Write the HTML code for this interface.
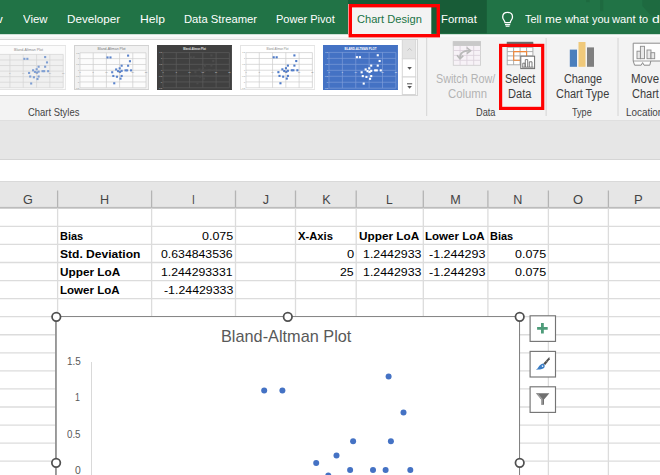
<!DOCTYPE html>
<html><head><meta charset="utf-8"><title>Bland-Altman Plot - Excel</title>
<style>
html,body{margin:0;padding:0;}
body{width:660px;height:475px;overflow:hidden;position:relative;background:#fff;font-family:"Liberation Sans",sans-serif;}
.abs{position:absolute;}
.t{position:absolute;white-space:pre;transform-origin:0 0;line-height:normal;display:block;}
#app{position:absolute;left:0;top:0;width:660px;height:475px;overflow:hidden;}
</style></head><body><div id="app">
<!-- tab bar + ribbon backgrounds -->
<svg class="abs" style="left:0;top:0" width="660" height="210" viewBox="0 0 660 210">
<rect x="0" y="0" width="660" height="210" fill="#f3f3f3"/>
<rect x="0" y="34" width="660" height="2.8" fill="#fafafa"/>
<rect x="0" y="0" width="660" height="34.2" fill="#217346"/>
<rect x="348" y="0" width="138.8" height="33.3" fill="#185c37"/>
<rect x="586.2" y="0" width="3.4" height="2.2" fill="#1e6a40"/>
<rect x="600" y="0" width="3.3" height="11.2" fill="#1e6a40"/>
<polygon points="642.3,0 660,0 660,16 651,15.5 642.3,6" fill="#1e6a40"/>
<rect x="348" y="4" width="83.3" height="30" fill="#f3f3f3"/>
<rect x="0" y="120.2" width="660" height="1" fill="#dadada"/>
<rect x="0" y="121.0" width="660" height="39" fill="#e6e6e6"/>
<rect x="0" y="159.2" width="660" height="1" fill="#d2d2d2"/>
<rect x="0" y="160.0" width="660" height="21.6" fill="#fff"/>
<rect x="0" y="181.2" width="660" height="1" fill="#d2d2d2"/>
<rect x="0" y="182.0" width="660" height="26.2" fill="#e6e6e6"/>
<rect x="0" y="206.9" width="660" height="1.9" fill="#bcbcbc"/>
<rect x="0" y="208.8" width="660" height="2" fill="#fff"/>
</svg>
<!-- gallery -->
<div class="abs" style="left:-2px;top:39px;width:418px;height:55px;background:#fff;border:1px solid #d6d6d6"></div>
<svg class="abs" style="left:-9.2px;top:44.6px" width="75.2" height="45" viewBox="0 0 75.2 45"><rect x="0.5" y="0.5" width="74.2" height="44" fill="#fbfbfb" stroke="#e4e4e4" stroke-width="1"/><rect x="5.6" y="9.4" width="66.6" height="33.4" fill="#f0f0f0"/><line x1="5.60" y1="9.4" x2="5.60" y2="42.8" stroke="#d4d4d4" stroke-width="0.7"/><line x1="18.92" y1="9.4" x2="18.92" y2="42.8" stroke="#d4d4d4" stroke-width="0.7"/><line x1="32.24" y1="9.4" x2="32.24" y2="42.8" stroke="#d4d4d4" stroke-width="0.7"/><line x1="45.56" y1="9.4" x2="45.56" y2="42.8" stroke="#d4d4d4" stroke-width="0.7"/><line x1="58.88" y1="9.4" x2="58.88" y2="42.8" stroke="#d4d4d4" stroke-width="0.7"/><line x1="72.20" y1="9.4" x2="72.20" y2="42.8" stroke="#d4d4d4" stroke-width="0.7"/><line x1="5.6" y1="9.40" x2="72.19999999999999" y2="9.40" stroke="#d4d4d4" stroke-width="0.7"/><line x1="5.6" y1="14.97" x2="72.19999999999999" y2="14.97" stroke="#d4d4d4" stroke-width="0.7"/><line x1="5.6" y1="20.53" x2="72.19999999999999" y2="20.53" stroke="#d4d4d4" stroke-width="0.7"/><line x1="5.6" y1="26.10" x2="72.19999999999999" y2="26.10" stroke="#d4d4d4" stroke-width="0.7"/><line x1="5.6" y1="31.67" x2="72.19999999999999" y2="31.67" stroke="#d4d4d4" stroke-width="0.7"/><line x1="5.6" y1="37.23" x2="72.19999999999999" y2="37.23" stroke="#d4d4d4" stroke-width="0.7"/><line x1="5.6" y1="42.80" x2="72.19999999999999" y2="42.80" stroke="#d4d4d4" stroke-width="0.7"/><rect x="32.32" y="12.79" width="2.1" height="2.1" fill="#7f9fd3"/><rect x="35.32" y="12.79" width="2.1" height="2.1" fill="#7f9fd3"/><rect x="53.10" y="11.02" width="2.1" height="2.1" fill="#7f9fd3"/><rect x="54.97" y="16.37" width="2.1" height="2.1" fill="#7f9fd3"/><rect x="53.10" y="20.67" width="2.1" height="2.1" fill="#7f9fd3"/><rect x="46.57" y="20.67" width="2.1" height="2.1" fill="#7f9fd3"/><rect x="44.64" y="23.18" width="2.1" height="2.1" fill="#7f9fd3"/><rect x="41.05" y="24.25" width="2.1" height="2.1" fill="#7f9fd3"/><rect x="42.91" y="25.85" width="2.1" height="2.1" fill="#7f9fd3"/><rect x="44.98" y="26.62" width="2.1" height="2.1" fill="#7f9fd3"/><rect x="46.57" y="25.58" width="2.1" height="2.1" fill="#7f9fd3"/><rect x="50.50" y="25.12" width="2.1" height="2.1" fill="#7f9fd3"/><rect x="52.10" y="25.12" width="2.1" height="2.1" fill="#7f9fd3"/><rect x="56.10" y="25.12" width="2.1" height="2.1" fill="#7f9fd3"/><rect x="37.05" y="26.92" width="2.1" height="2.1" fill="#7f9fd3"/><rect x="38.18" y="30.46" width="2.1" height="2.1" fill="#7f9fd3"/><rect x="41.85" y="31.20" width="2.1" height="2.1" fill="#7f9fd3"/><rect x="46.57" y="30.46" width="2.1" height="2.1" fill="#7f9fd3"/><rect x="45.44" y="33.00" width="2.1" height="2.1" fill="#7f9fd3"/><rect x="39.12" y="37.44" width="2.1" height="2.1" fill="#7f9fd3"/><text x="37.6" y="6.3" font-family="Liberation Sans, sans-serif" font-size="3.6" text-anchor="middle" textLength="29" lengthAdjust="spacingAndGlyphs" fill="#8a8a8a" font-weight="400">Bland-Altman Plot</text><text x="5.60" y="28.70" font-family="Liberation Sans, sans-serif" font-size="2.2" text-anchor="middle" fill="#a8a8a8">0</text><text x="18.92" y="28.70" font-family="Liberation Sans, sans-serif" font-size="2.2" text-anchor="middle" fill="#a8a8a8">5</text><text x="32.24" y="28.70" font-family="Liberation Sans, sans-serif" font-size="2.2" text-anchor="middle" fill="#a8a8a8">10</text><text x="45.56" y="28.70" font-family="Liberation Sans, sans-serif" font-size="2.2" text-anchor="middle" fill="#a8a8a8">15</text><text x="58.88" y="28.70" font-family="Liberation Sans, sans-serif" font-size="2.2" text-anchor="middle" fill="#a8a8a8">20</text><text x="72.20" y="28.70" font-family="Liberation Sans, sans-serif" font-size="2.2" text-anchor="middle" fill="#a8a8a8">25</text></svg><svg class="abs" style="left:73.8px;top:44.6px" width="75.2" height="45" viewBox="0 0 75.2 45"><rect x="0.5" y="0.5" width="74.2" height="44" fill="#f1f1f1" stroke="#d2d2d2" stroke-width="1"/><rect x="6.0" y="7.8" width="66.0" height="35.0" fill="#fcfcfc"/><line x1="6.00" y1="7.8" x2="6.00" y2="42.8" stroke="#cdcdcd" stroke-width="0.7"/><line x1="19.20" y1="7.8" x2="19.20" y2="42.8" stroke="#cdcdcd" stroke-width="0.7"/><line x1="32.40" y1="7.8" x2="32.40" y2="42.8" stroke="#cdcdcd" stroke-width="0.7"/><line x1="45.60" y1="7.8" x2="45.60" y2="42.8" stroke="#cdcdcd" stroke-width="0.7"/><line x1="58.80" y1="7.8" x2="58.80" y2="42.8" stroke="#cdcdcd" stroke-width="0.7"/><line x1="72.00" y1="7.8" x2="72.00" y2="42.8" stroke="#cdcdcd" stroke-width="0.7"/><line x1="6.0" y1="7.80" x2="72.0" y2="7.80" stroke="#cdcdcd" stroke-width="0.7"/><line x1="6.0" y1="13.63" x2="72.0" y2="13.63" stroke="#cdcdcd" stroke-width="0.7"/><line x1="6.0" y1="19.47" x2="72.0" y2="19.47" stroke="#cdcdcd" stroke-width="0.7"/><line x1="6.0" y1="25.30" x2="72.0" y2="25.30" stroke="#cdcdcd" stroke-width="0.7"/><line x1="6.0" y1="31.13" x2="72.0" y2="31.13" stroke="#cdcdcd" stroke-width="0.7"/><line x1="6.0" y1="36.97" x2="72.0" y2="36.97" stroke="#cdcdcd" stroke-width="0.7"/><line x1="6.0" y1="42.80" x2="72.0" y2="42.80" stroke="#cdcdcd" stroke-width="0.7"/><rect x="32.47" y="11.40" width="2.1" height="2.1" fill="#5b84cc"/><rect x="35.44" y="11.40" width="2.1" height="2.1" fill="#5b84cc"/><rect x="53.06" y="9.55" width="2.1" height="2.1" fill="#5b84cc"/><rect x="54.91" y="15.15" width="2.1" height="2.1" fill="#5b84cc"/><rect x="53.06" y="19.66" width="2.1" height="2.1" fill="#5b84cc"/><rect x="46.60" y="19.66" width="2.1" height="2.1" fill="#5b84cc"/><rect x="44.68" y="22.29" width="2.1" height="2.1" fill="#5b84cc"/><rect x="41.12" y="23.41" width="2.1" height="2.1" fill="#5b84cc"/><rect x="42.97" y="25.09" width="2.1" height="2.1" fill="#5b84cc"/><rect x="45.01" y="25.90" width="2.1" height="2.1" fill="#5b84cc"/><rect x="46.60" y="24.81" width="2.1" height="2.1" fill="#5b84cc"/><rect x="50.49" y="24.32" width="2.1" height="2.1" fill="#5b84cc"/><rect x="52.07" y="24.32" width="2.1" height="2.1" fill="#5b84cc"/><rect x="56.03" y="24.32" width="2.1" height="2.1" fill="#5b84cc"/><rect x="37.16" y="26.21" width="2.1" height="2.1" fill="#5b84cc"/><rect x="38.28" y="29.92" width="2.1" height="2.1" fill="#5b84cc"/><rect x="41.91" y="30.69" width="2.1" height="2.1" fill="#5b84cc"/><rect x="46.60" y="29.92" width="2.1" height="2.1" fill="#5b84cc"/><rect x="45.47" y="32.58" width="2.1" height="2.1" fill="#5b84cc"/><rect x="39.20" y="37.23" width="2.1" height="2.1" fill="#5b84cc"/><text x="37.6" y="5.0" font-family="Liberation Sans, sans-serif" font-size="3.6" text-anchor="middle" textLength="28" lengthAdjust="spacingAndGlyphs" fill="#777" font-weight="400">Bland-Altman Plot</text><text x="6.00" y="27.90" font-family="Liberation Sans, sans-serif" font-size="2.2" text-anchor="middle" fill="#8e8e8e">0</text><text x="19.20" y="27.90" font-family="Liberation Sans, sans-serif" font-size="2.2" text-anchor="middle" fill="#8e8e8e">5</text><text x="32.40" y="27.90" font-family="Liberation Sans, sans-serif" font-size="2.2" text-anchor="middle" fill="#8e8e8e">10</text><text x="45.60" y="27.90" font-family="Liberation Sans, sans-serif" font-size="2.2" text-anchor="middle" fill="#8e8e8e">15</text><text x="58.80" y="27.90" font-family="Liberation Sans, sans-serif" font-size="2.2" text-anchor="middle" fill="#8e8e8e">20</text><text x="72.00" y="27.90" font-family="Liberation Sans, sans-serif" font-size="2.2" text-anchor="middle" fill="#8e8e8e">25</text><text x="5.20" y="8.60" font-family="Liberation Sans, sans-serif" font-size="2.2" text-anchor="end" fill="#8e8e8e">1.5</text><text x="5.20" y="14.43" font-family="Liberation Sans, sans-serif" font-size="2.2" text-anchor="end" fill="#8e8e8e">1</text><text x="5.20" y="20.27" font-family="Liberation Sans, sans-serif" font-size="2.2" text-anchor="end" fill="#8e8e8e">0.5</text><text x="5.20" y="26.10" font-family="Liberation Sans, sans-serif" font-size="2.2" text-anchor="end" fill="#8e8e8e">0</text><text x="5.20" y="31.93" font-family="Liberation Sans, sans-serif" font-size="2.2" text-anchor="end" fill="#8e8e8e">-0.5</text><text x="5.20" y="37.77" font-family="Liberation Sans, sans-serif" font-size="2.2" text-anchor="end" fill="#8e8e8e">-1</text><text x="5.20" y="43.60" font-family="Liberation Sans, sans-serif" font-size="2.2" text-anchor="end" fill="#8e8e8e">-1.5</text></svg><svg class="abs" style="left:156.8px;top:44.6px" width="75.2" height="45" viewBox="0 0 75.2 45"><rect x="0.5" y="0.5" width="74.2" height="44" fill="#404040" stroke="#404040" stroke-width="1"/><line x1="6.00" y1="7.6" x2="6.00" y2="42.800000000000004" stroke="#5c5c5c" stroke-width="0.7"/><line x1="19.28" y1="7.6" x2="19.28" y2="42.800000000000004" stroke="#5c5c5c" stroke-width="0.7"/><line x1="32.56" y1="7.6" x2="32.56" y2="42.800000000000004" stroke="#5c5c5c" stroke-width="0.7"/><line x1="45.84" y1="7.6" x2="45.84" y2="42.800000000000004" stroke="#5c5c5c" stroke-width="0.7"/><line x1="59.12" y1="7.6" x2="59.12" y2="42.800000000000004" stroke="#5c5c5c" stroke-width="0.7"/><line x1="72.40" y1="7.6" x2="72.40" y2="42.800000000000004" stroke="#5c5c5c" stroke-width="0.7"/><line x1="6.0" y1="7.60" x2="72.4" y2="7.60" stroke="#5c5c5c" stroke-width="0.7"/><line x1="6.0" y1="13.47" x2="72.4" y2="13.47" stroke="#5c5c5c" stroke-width="0.7"/><line x1="6.0" y1="19.33" x2="72.4" y2="19.33" stroke="#5c5c5c" stroke-width="0.7"/><line x1="6.0" y1="25.20" x2="72.4" y2="25.20" stroke="#5c5c5c" stroke-width="0.7"/><line x1="6.0" y1="31.07" x2="72.4" y2="31.07" stroke="#5c5c5c" stroke-width="0.7"/><line x1="6.0" y1="36.93" x2="72.4" y2="36.93" stroke="#5c5c5c" stroke-width="0.7"/><line x1="6.0" y1="42.80" x2="72.4" y2="42.80" stroke="#5c5c5c" stroke-width="0.7"/><rect x="32.64" y="11.23" width="2.1" height="2.1" fill="#4c4c4c"/><rect x="35.63" y="11.23" width="2.1" height="2.1" fill="#4c4c4c"/><rect x="53.36" y="9.37" width="2.1" height="2.1" fill="#4c4c4c"/><rect x="55.21" y="15.00" width="2.1" height="2.1" fill="#4c4c4c"/><rect x="53.36" y="19.54" width="2.1" height="2.1" fill="#4c4c4c"/><rect x="46.85" y="19.54" width="2.1" height="2.1" fill="#4c4c4c"/><rect x="44.92" y="22.18" width="2.1" height="2.1" fill="#4c4c4c"/><rect x="41.34" y="23.31" width="2.1" height="2.1" fill="#4c4c4c"/><rect x="43.20" y="24.99" width="2.1" height="2.1" fill="#4c4c4c"/><rect x="45.25" y="25.80" width="2.1" height="2.1" fill="#4c4c4c"/><rect x="46.85" y="24.71" width="2.1" height="2.1" fill="#4c4c4c"/><rect x="50.77" y="24.22" width="2.1" height="2.1" fill="#4c4c4c"/><rect x="52.36" y="24.22" width="2.1" height="2.1" fill="#4c4c4c"/><rect x="56.34" y="24.22" width="2.1" height="2.1" fill="#4c4c4c"/><rect x="37.35" y="26.12" width="2.1" height="2.1" fill="#4c4c4c"/><rect x="38.48" y="29.85" width="2.1" height="2.1" fill="#4c4c4c"/><rect x="42.13" y="30.63" width="2.1" height="2.1" fill="#4c4c4c"/><rect x="46.85" y="29.85" width="2.1" height="2.1" fill="#4c4c4c"/><rect x="45.72" y="32.53" width="2.1" height="2.1" fill="#4c4c4c"/><rect x="39.41" y="37.21" width="2.1" height="2.1" fill="#4c4c4c"/><text x="37.6" y="5.0" font-family="Liberation Sans, sans-serif" font-size="3.0" text-anchor="middle" textLength="22.7" lengthAdjust="spacingAndGlyphs" fill="#e0e0e0" font-weight="700">Bland-Altman Plot</text><text x="6.00" y="27.80" font-family="Liberation Sans, sans-serif" font-size="2.2" text-anchor="middle" fill="#c8c8c8">0</text><text x="19.28" y="27.80" font-family="Liberation Sans, sans-serif" font-size="2.2" text-anchor="middle" fill="#c8c8c8">5</text><text x="32.56" y="27.80" font-family="Liberation Sans, sans-serif" font-size="2.2" text-anchor="middle" fill="#c8c8c8">10</text><text x="45.84" y="27.80" font-family="Liberation Sans, sans-serif" font-size="2.2" text-anchor="middle" fill="#c8c8c8">15</text><text x="59.12" y="27.80" font-family="Liberation Sans, sans-serif" font-size="2.2" text-anchor="middle" fill="#c8c8c8">20</text><text x="72.40" y="27.80" font-family="Liberation Sans, sans-serif" font-size="2.2" text-anchor="middle" fill="#c8c8c8">25</text><text x="5.20" y="8.40" font-family="Liberation Sans, sans-serif" font-size="2.2" text-anchor="end" fill="#c8c8c8">1.5</text><text x="5.20" y="14.27" font-family="Liberation Sans, sans-serif" font-size="2.2" text-anchor="end" fill="#c8c8c8">1</text><text x="5.20" y="20.13" font-family="Liberation Sans, sans-serif" font-size="2.2" text-anchor="end" fill="#c8c8c8">0.5</text><text x="5.20" y="26.00" font-family="Liberation Sans, sans-serif" font-size="2.2" text-anchor="end" fill="#c8c8c8">0</text><text x="5.20" y="31.87" font-family="Liberation Sans, sans-serif" font-size="2.2" text-anchor="end" fill="#c8c8c8">-0.5</text><text x="5.20" y="37.73" font-family="Liberation Sans, sans-serif" font-size="2.2" text-anchor="end" fill="#c8c8c8">-1</text><text x="5.20" y="43.60" font-family="Liberation Sans, sans-serif" font-size="2.2" text-anchor="end" fill="#c8c8c8">-1.5</text></svg><svg class="abs" style="left:239.8px;top:44.6px" width="75.2" height="45" viewBox="0 0 75.2 45"><rect x="0.5" y="0.5" width="74.2" height="44" fill="#ffffff" stroke="#e4e4e4" stroke-width="1"/><line x1="6.00" y1="7.6" x2="6.00" y2="42.800000000000004" stroke="#cccccc" stroke-width="0.7"/><line x1="19.28" y1="7.6" x2="19.28" y2="42.800000000000004" stroke="#cccccc" stroke-width="0.7"/><line x1="32.56" y1="7.6" x2="32.56" y2="42.800000000000004" stroke="#cccccc" stroke-width="0.7"/><line x1="45.84" y1="7.6" x2="45.84" y2="42.800000000000004" stroke="#cccccc" stroke-width="0.7"/><line x1="59.12" y1="7.6" x2="59.12" y2="42.800000000000004" stroke="#cccccc" stroke-width="0.7"/><line x1="72.40" y1="7.6" x2="72.40" y2="42.800000000000004" stroke="#cccccc" stroke-width="0.7"/><line x1="6.0" y1="7.60" x2="72.4" y2="7.60" stroke="#cccccc" stroke-width="0.7"/><line x1="6.0" y1="13.47" x2="72.4" y2="13.47" stroke="#cccccc" stroke-width="0.7"/><line x1="6.0" y1="19.33" x2="72.4" y2="19.33" stroke="#cccccc" stroke-width="0.7"/><line x1="6.0" y1="25.20" x2="72.4" y2="25.20" stroke="#cccccc" stroke-width="0.7"/><line x1="6.0" y1="31.07" x2="72.4" y2="31.07" stroke="#cccccc" stroke-width="0.7"/><line x1="6.0" y1="36.93" x2="72.4" y2="36.93" stroke="#cccccc" stroke-width="0.7"/><line x1="6.0" y1="42.80" x2="72.4" y2="42.80" stroke="#cccccc" stroke-width="0.7"/><rect x="32.64" y="11.23" width="2.1" height="2.1" fill="#4f7bc8"/><rect x="35.63" y="11.23" width="2.1" height="2.1" fill="#4f7bc8"/><rect x="53.36" y="9.37" width="2.1" height="2.1" fill="#4f7bc8"/><rect x="55.21" y="15.00" width="2.1" height="2.1" fill="#4f7bc8"/><rect x="53.36" y="19.54" width="2.1" height="2.1" fill="#4f7bc8"/><rect x="46.85" y="19.54" width="2.1" height="2.1" fill="#4f7bc8"/><rect x="44.92" y="22.18" width="2.1" height="2.1" fill="#4f7bc8"/><rect x="41.34" y="23.31" width="2.1" height="2.1" fill="#4f7bc8"/><rect x="43.20" y="24.99" width="2.1" height="2.1" fill="#4f7bc8"/><rect x="45.25" y="25.80" width="2.1" height="2.1" fill="#4f7bc8"/><rect x="46.85" y="24.71" width="2.1" height="2.1" fill="#4f7bc8"/><rect x="50.77" y="24.22" width="2.1" height="2.1" fill="#4f7bc8"/><rect x="52.36" y="24.22" width="2.1" height="2.1" fill="#4f7bc8"/><rect x="56.34" y="24.22" width="2.1" height="2.1" fill="#4f7bc8"/><rect x="37.35" y="26.12" width="2.1" height="2.1" fill="#4f7bc8"/><rect x="38.48" y="29.85" width="2.1" height="2.1" fill="#4f7bc8"/><rect x="42.13" y="30.63" width="2.1" height="2.1" fill="#4f7bc8"/><rect x="46.85" y="29.85" width="2.1" height="2.1" fill="#4f7bc8"/><rect x="45.72" y="32.53" width="2.1" height="2.1" fill="#4f7bc8"/><rect x="39.41" y="37.21" width="2.1" height="2.1" fill="#4f7bc8"/><text x="37.6" y="5.0" font-family="Liberation Sans, sans-serif" font-size="3.0" text-anchor="middle" textLength="22" lengthAdjust="spacingAndGlyphs" fill="#8a8a8a" font-weight="400">Bland-Altman Plot</text><text x="6.00" y="27.80" font-family="Liberation Sans, sans-serif" font-size="2.2" text-anchor="middle" fill="#8e8e8e">0</text><text x="19.28" y="27.80" font-family="Liberation Sans, sans-serif" font-size="2.2" text-anchor="middle" fill="#8e8e8e">5</text><text x="32.56" y="27.80" font-family="Liberation Sans, sans-serif" font-size="2.2" text-anchor="middle" fill="#8e8e8e">10</text><text x="45.84" y="27.80" font-family="Liberation Sans, sans-serif" font-size="2.2" text-anchor="middle" fill="#8e8e8e">15</text><text x="59.12" y="27.80" font-family="Liberation Sans, sans-serif" font-size="2.2" text-anchor="middle" fill="#8e8e8e">20</text><text x="72.40" y="27.80" font-family="Liberation Sans, sans-serif" font-size="2.2" text-anchor="middle" fill="#8e8e8e">25</text><text x="5.20" y="8.40" font-family="Liberation Sans, sans-serif" font-size="2.2" text-anchor="end" fill="#8e8e8e">1.5</text><text x="5.20" y="14.27" font-family="Liberation Sans, sans-serif" font-size="2.2" text-anchor="end" fill="#8e8e8e">1</text><text x="5.20" y="20.13" font-family="Liberation Sans, sans-serif" font-size="2.2" text-anchor="end" fill="#8e8e8e">0.5</text><text x="5.20" y="26.00" font-family="Liberation Sans, sans-serif" font-size="2.2" text-anchor="end" fill="#8e8e8e">0</text><text x="5.20" y="31.87" font-family="Liberation Sans, sans-serif" font-size="2.2" text-anchor="end" fill="#8e8e8e">-0.5</text><text x="5.20" y="37.73" font-family="Liberation Sans, sans-serif" font-size="2.2" text-anchor="end" fill="#8e8e8e">-1</text><text x="5.20" y="43.60" font-family="Liberation Sans, sans-serif" font-size="2.2" text-anchor="end" fill="#8e8e8e">-1.5</text></svg><svg class="abs" style="left:322.6px;top:44.6px" width="75.2" height="45" viewBox="0 0 75.2 45"><rect x="0.5" y="0.5" width="74.2" height="44" fill="#4472c4" stroke="#4472c4" stroke-width="1"/><line x1="6.00" y1="7.4" x2="6.00" y2="43.199999999999996" stroke="#7d9cd8" stroke-width="0.7"/><line x1="19.38" y1="7.4" x2="19.38" y2="43.199999999999996" stroke="#7d9cd8" stroke-width="0.7"/><line x1="32.76" y1="7.4" x2="32.76" y2="43.199999999999996" stroke="#7d9cd8" stroke-width="0.7"/><line x1="46.14" y1="7.4" x2="46.14" y2="43.199999999999996" stroke="#7d9cd8" stroke-width="0.7"/><line x1="59.52" y1="7.4" x2="59.52" y2="43.199999999999996" stroke="#7d9cd8" stroke-width="0.7"/><line x1="72.90" y1="7.4" x2="72.90" y2="43.199999999999996" stroke="#7d9cd8" stroke-width="0.7"/><line x1="6.0" y1="7.40" x2="72.9" y2="7.40" stroke="#7d9cd8" stroke-width="0.7"/><line x1="6.0" y1="13.37" x2="72.9" y2="13.37" stroke="#7d9cd8" stroke-width="0.7"/><line x1="6.0" y1="19.33" x2="72.9" y2="19.33" stroke="#7d9cd8" stroke-width="0.7"/><line x1="6.0" y1="25.30" x2="72.9" y2="25.30" stroke="#7d9cd8" stroke-width="0.7"/><line x1="6.0" y1="31.27" x2="72.9" y2="31.27" stroke="#7d9cd8" stroke-width="0.7"/><line x1="6.0" y1="37.23" x2="72.9" y2="37.23" stroke="#7d9cd8" stroke-width="0.7"/><line x1="6.0" y1="43.20" x2="72.9" y2="43.20" stroke="#7d9cd8" stroke-width="0.7"/><rect x="32.85" y="11.11" width="2.1" height="2.1" fill="#ffffff"/><rect x="35.86" y="11.11" width="2.1" height="2.1" fill="#ffffff"/><rect x="53.72" y="9.21" width="2.1" height="2.1" fill="#ffffff"/><rect x="55.59" y="14.94" width="2.1" height="2.1" fill="#ffffff"/><rect x="53.72" y="19.56" width="2.1" height="2.1" fill="#ffffff"/><rect x="47.16" y="19.56" width="2.1" height="2.1" fill="#ffffff"/><rect x="45.22" y="22.25" width="2.1" height="2.1" fill="#ffffff"/><rect x="41.61" y="23.39" width="2.1" height="2.1" fill="#ffffff"/><rect x="43.48" y="25.11" width="2.1" height="2.1" fill="#ffffff"/><rect x="45.56" y="25.93" width="2.1" height="2.1" fill="#ffffff"/><rect x="47.16" y="24.82" width="2.1" height="2.1" fill="#ffffff"/><rect x="51.11" y="24.32" width="2.1" height="2.1" fill="#ffffff"/><rect x="52.72" y="24.32" width="2.1" height="2.1" fill="#ffffff"/><rect x="56.73" y="24.32" width="2.1" height="2.1" fill="#ffffff"/><rect x="37.60" y="26.25" width="2.1" height="2.1" fill="#ffffff"/><rect x="38.73" y="30.05" width="2.1" height="2.1" fill="#ffffff"/><rect x="42.41" y="30.84" width="2.1" height="2.1" fill="#ffffff"/><rect x="47.16" y="30.05" width="2.1" height="2.1" fill="#ffffff"/><rect x="46.03" y="32.77" width="2.1" height="2.1" fill="#ffffff"/><rect x="39.67" y="37.53" width="2.1" height="2.1" fill="#ffffff"/><text x="37.6" y="5.0" font-family="Liberation Sans, sans-serif" font-size="3.0" text-anchor="middle" textLength="32" lengthAdjust="spacingAndGlyphs" fill="#fff" font-weight="700">BLAND-ALTMAN PLOT</text><text x="6.00" y="27.90" font-family="Liberation Sans, sans-serif" font-size="2.2" text-anchor="middle" fill="#e4ebf8">0</text><text x="19.38" y="27.90" font-family="Liberation Sans, sans-serif" font-size="2.2" text-anchor="middle" fill="#e4ebf8">5</text><text x="32.76" y="27.90" font-family="Liberation Sans, sans-serif" font-size="2.2" text-anchor="middle" fill="#e4ebf8">10</text><text x="46.14" y="27.90" font-family="Liberation Sans, sans-serif" font-size="2.2" text-anchor="middle" fill="#e4ebf8">15</text><text x="59.52" y="27.90" font-family="Liberation Sans, sans-serif" font-size="2.2" text-anchor="middle" fill="#e4ebf8">20</text><text x="72.90" y="27.90" font-family="Liberation Sans, sans-serif" font-size="2.2" text-anchor="middle" fill="#e4ebf8">25</text><text x="5.20" y="8.20" font-family="Liberation Sans, sans-serif" font-size="2.2" text-anchor="end" fill="#e4ebf8">1.5</text><text x="5.20" y="14.17" font-family="Liberation Sans, sans-serif" font-size="2.2" text-anchor="end" fill="#e4ebf8">1</text><text x="5.20" y="20.13" font-family="Liberation Sans, sans-serif" font-size="2.2" text-anchor="end" fill="#e4ebf8">0.5</text><text x="5.20" y="26.10" font-family="Liberation Sans, sans-serif" font-size="2.2" text-anchor="end" fill="#e4ebf8">0</text><text x="5.20" y="32.07" font-family="Liberation Sans, sans-serif" font-size="2.2" text-anchor="end" fill="#e4ebf8">-0.5</text><text x="5.20" y="38.03" font-family="Liberation Sans, sans-serif" font-size="2.2" text-anchor="end" fill="#e4ebf8">-1</text><text x="5.20" y="44.00" font-family="Liberation Sans, sans-serif" font-size="2.2" text-anchor="end" fill="#e4ebf8">-1.5</text></svg>
<svg class="abs" style="left:400px;top:36px" width="20" height="62" viewBox="400 36 20 62">
<rect x="402.3" y="39.5" width="13.4" height="19.3" fill="#e4e4e4" stroke="#d6d6d6"/>
<rect x="402.3" y="58.8" width="13.4" height="18.2" fill="#fff" stroke="#d6d6d6"/>
<rect x="402.3" y="77" width="13.4" height="17.5" fill="#fff" stroke="#d6d6d6"/>
<path d="M407.5 50.6 L409.6 48.4 L411.7 50.6" stroke="#c0c0c0" stroke-width="0.9" fill="none"/>
<polygon points="407.3,67 411.9,67 409.6,69.8" fill="#555"/>
<rect x="407" y="83.3" width="5.2" height="1" fill="#555"/>
<polygon points="407.3,86 411.9,86 409.6,88.8" fill="#555"/>
</svg>
<!-- separators -->
<svg class="abs" style="left:420px;top:36px" width="240" height="84" viewBox="420 36 240 84" fill="none" stroke="#d4d4d4" stroke-width="1">
<path d="M426.7 38V116 M546.1 38V116 M618 38V116"/>
</svg>
<!-- ribbon icons -->
<svg class="abs" style="left:430px;top:36px" width="230" height="40" viewBox="430 36 230 40">
<!-- switch row/col (disabled) -->
<g stroke="#ddd3dd" fill="none" stroke-width="0.9">
<rect x="453.3" y="41.7" width="27.2" height="23.6" fill="#f7f2f7" stroke="#cfcfcf"/>
<path d="M453.3 50.5H480.5 M453.3 55.4H480.5 M453.3 60.3H480.5 M460.1 45.4V65.3 M466.9 45.4V65.3 M473.7 45.4V65.3"/>
<rect x="453.3" y="41.7" width="27.2" height="3.8" fill="#c9c9c9" stroke="#c9c9c9"/>
</g>
<path d="M460 58.6 C459.4 53 463.6 50.2 470.2 50.7" stroke="#b9b9b9" stroke-width="1.8" fill="none"/>
<path d="M466.6 47.5 L470.6 50.700 L466.800 53.700 M457 55.3 L460 58.900 L463.300 55.6" stroke="#b9b9b9" stroke-width="1.6" fill="none"/>
<!-- select data -->
<g stroke="#a6a6a6" fill="none" stroke-width="0.9">
<rect x="507.2" y="43" width="25.7" height="21.8" fill="#fff"/>
<path d="M507.2 47.300H532.9 M507.2 51.6H532.9 M507.2 55.9H532.9 M507.2 60.3H532.9 M513.6 43V64.8 M520.1 43V64.8 M526.600 43V64.8"/>
</g>
<rect x="506.8" y="41.8" width="26.4" height="2.2" fill="#6a6a6a"/>
<path d="M526.6 55.9 V51.6 H513.7 V60.3 H520.1" stroke="#f0883a" stroke-width="1.1" fill="none"/>
<rect x="520.8" y="56.2" width="13.8" height="12.4" fill="#fff" stroke="#6e6e6e" stroke-width="1"/>
<path d="M522.8 67V63.200h2.200V67 M525.3 67V59.6h2.4V67 M529.300 67V61.800h2.700V67 M522 67.2H533.6" stroke="#6e6e6e" stroke-width="0.9" fill="none"/>
<!-- change chart type -->
<rect x="569.8" y="49.6" width="7.2" height="17.2" fill="#4b7fbc"/>
<rect x="578.5" y="42" width="7" height="24.8" fill="#f0c97a"/>
<rect x="587" y="47.4" width="7" height="19.4" fill="#7f7f7f"/>
<!-- move chart -->
<path d="M633.2 43.200 H664 V61 H650.8 L649.8 65.200 H644 L642.6 62.6 L641.2 65.200 H634.6 L633.2 61 Z" fill="#fdfdfd" stroke="#8c8c8c" stroke-width="1"/>
<path d="M633.2 61 H651" stroke="#8c8c8c" stroke-width="0.8" fill="none"/>
<g fill="#e9e9e9" stroke="#8c8c8c" stroke-width="0.9">
<rect x="637" y="51.2" width="3.4" height="7.5"/>
<rect x="640.4" y="46.300" width="4.1" height="12.4"/>
<rect x="647" y="50" width="4" height="8.7"/>
<rect x="651" y="52.7" width="3.700" height="6"/>
</g>
</svg>
<!-- red highlight boxes -->
<svg class="abs" style="left:340px;top:0" width="220" height="120" viewBox="340 0 220 120" fill="none" stroke="#ff0000">
<rect x="350.3" y="5.7" width="88.0" height="30.0" stroke-width="3.4"/>
<rect x="500.6" y="45.4" width="42.100" height="63" stroke-width="3.2"/>
</svg>
<!-- lightbulb -->
<svg class="abs" style="left:500px;top:10px" width="16" height="20" viewBox="500 10 16 20">
<path d="M505 22.700 C505 20.700 502.700 19.600 502.700 16.900 C502.700 14 504.900 12.400 507.600 12.400 C510.300 12.400 512.500 14 512.500 16.900 C512.500 19.600 510.200 20.700 510.200 22.700 Z" fill="none" stroke="#fff" stroke-width="1.3"/>
<path d="M505 24.600H510.200 M505.700 26.300H509.500" stroke="#fff" stroke-width="1.1" fill="none"/>
</svg>
<!-- grid -->
<svg class="abs" style="left:0;top:180px" width="660" height="295" viewBox="0 180 660 295" fill="none" stroke-width="1.3"><path d="M57.60 208.3V476" stroke="#dcdcdc"/><path d="M57.60 190.5V207.3" stroke="#b4b4b4"/><path d="M151.60 208.3V476" stroke="#dcdcdc"/><path d="M151.60 190.5V207.3" stroke="#b4b4b4"/><path d="M235.50 208.3V476" stroke="#dcdcdc"/><path d="M235.50 190.5V207.3" stroke="#b4b4b4"/><path d="M295.50 208.3V476" stroke="#dcdcdc"/><path d="M295.50 190.5V207.3" stroke="#b4b4b4"/><path d="M356.20 208.3V476" stroke="#dcdcdc"/><path d="M356.20 190.5V207.3" stroke="#b4b4b4"/><path d="M423.30 208.3V476" stroke="#dcdcdc"/><path d="M423.30 190.5V207.3" stroke="#b4b4b4"/><path d="M487.90 208.3V476" stroke="#dcdcdc"/><path d="M487.90 190.5V207.3" stroke="#b4b4b4"/><path d="M548.40 208.3V476" stroke="#dcdcdc"/><path d="M548.40 190.5V207.3" stroke="#b4b4b4"/><path d="M608.40 208.3V476" stroke="#dcdcdc"/><path d="M608.40 190.5V207.3" stroke="#b4b4b4"/><path d="M0 226.40H660" stroke="#dcdcdc"/><path d="M0 244.46H660" stroke="#dcdcdc"/><path d="M0 262.52H660" stroke="#dcdcdc"/><path d="M0 280.58H660" stroke="#dcdcdc"/><path d="M0 298.64H660" stroke="#dcdcdc"/><path d="M0 316.70H660" stroke="#dcdcdc"/><path d="M0 334.76H660" stroke="#dcdcdc"/><path d="M0 352.82H660" stroke="#dcdcdc"/><path d="M0 370.88H660" stroke="#dcdcdc"/><path d="M0 388.94H660" stroke="#dcdcdc"/><path d="M0 407.00H660" stroke="#dcdcdc"/><path d="M0 425.06H660" stroke="#dcdcdc"/><path d="M0 443.12H660" stroke="#dcdcdc"/><path d="M0 461.18H660" stroke="#dcdcdc"/><path d="M0 479.24H660" stroke="#dcdcdc"/></svg>
<!-- chart -->
<svg class="abs" style="left:0;top:300px" width="660" height="175" viewBox="0 300 660 175">
<rect x="56" y="316.6" width="463.6" height="170" fill="#fff"/>
<path d="M56 316.55 H519.7" stroke="#777" stroke-width="0.9" fill="none"/>
<path d="M55.95 316.9 V476" stroke="#929292" stroke-width="1.8" fill="none"/>
<path d="M519.55 316.9 V476" stroke="#6e6e6e" stroke-width="0.9" fill="none"/>
<path d="M91.5 362 V476" stroke="#d9d9d9" stroke-width="1" fill="none"/>
<circle cx="264.2" cy="390.6" r="3" fill="#4472c4"/><circle cx="282.4" cy="390.6" r="3" fill="#4472c4"/><circle cx="353.1" cy="441.2" r="3" fill="#4472c4"/><circle cx="336.5" cy="455.6" r="3" fill="#4472c4"/><circle cx="316.2" cy="462.9" r="3" fill="#4472c4"/><circle cx="350.1" cy="470" r="3" fill="#4472c4"/><circle cx="328.3" cy="475.5" r="3" fill="#4472c4"/><circle cx="388.6" cy="376.5" r="3" fill="#4472c4"/><circle cx="403.5" cy="412.6" r="3" fill="#4472c4"/><circle cx="390.9" cy="441.2" r="3" fill="#4472c4"/><circle cx="373" cy="470" r="3" fill="#4472c4"/><circle cx="385.6" cy="470" r="3" fill="#4472c4"/><circle cx="410.3" cy="470" r="3" fill="#4472c4"/>
<circle cx="56.3" cy="316.8" r="4.25" fill="#fff" stroke="#505050" stroke-width="1.75"/><circle cx="287.8" cy="316.8" r="4.25" fill="#fff" stroke="#505050" stroke-width="1.75"/><circle cx="519.7" cy="316.8" r="4.25" fill="#fff" stroke="#505050" stroke-width="1.75"/><circle cx="56.1" cy="462.8" r="4.25" fill="#fff" stroke="#505050" stroke-width="1.75"/><circle cx="519.7" cy="462.8" r="4.25" fill="#fff" stroke="#505050" stroke-width="1.75"/>
<!-- chart buttons -->
<g fill="#fff" stroke="#747474" stroke-width="1.15">
<rect x="530.1" y="315.8" width="25.4" height="25.6"/>
<rect x="530.1" y="351.4" width="25.4" height="25.6"/>
<rect x="530.1" y="386.8" width="25.4" height="25.6"/>
</g>
<path d="M542.4 323 V333.6 M537.1 328.3 H547.7" stroke="#4e9c7a" stroke-width="2.8" fill="none"/>
<path d="M549.3 356.9 L549.7 359.2 L545.2 364.9 L543.300 363.4 Z" fill="#4f4f4f"/>
<path d="M545.9 360.700 L547.5 362" stroke="#b0b0b0" stroke-width="0.6" fill="none"/>
<path d="M543.1 363.5 C545.1 364.4 545.3 367 543.6 368.300 C541.600 369.8 538.6 369.300 535.9 369.9 C538.5 368.4 538.8 364.600 543.1 363.5 Z" fill="#3a7cc4"/>
<ellipse cx="542.5" cy="366.1" rx="0.9" ry="0.7" fill="#e8f0fa" transform="rotate(40 542.5 366.1)"/>
<path d="M535.9 393.2 H549.4 L544 399.6 V404.8 H541.2 V399.6 Z" fill="#707070"/>
<path d="M537.6 394 L542 398.9 V404.300" stroke="#e4e4e4" stroke-width="0.6" fill="none"/>
</svg>
<!-- text -->
<span class="t" style="left:-7.00px;top:12.30px;font-size:11.6px;font-weight:400;color:#fff;transform:scaleX(1.1515)">w</span>
<span class="t" style="left:23.40px;top:12.30px;font-size:11.6px;font-weight:400;color:#fff;transform:scaleX(0.9820)">View</span>
<span class="t" style="left:67.00px;top:12.30px;font-size:11.6px;font-weight:400;color:#fff;transform:scaleX(1.0048)">Developer</span>
<span class="t" style="left:139.94px;top:12.30px;font-size:11.6px;font-weight:400;color:#fff;transform:scaleX(1.0451)">Help</span>
<span class="t" style="left:184.03px;top:12.30px;font-size:11.6px;font-weight:400;color:#fff;transform:scaleX(0.9697)">Data Streamer</span>
<span class="t" style="left:276.05px;top:12.30px;font-size:11.6px;font-weight:400;color:#fff;transform:scaleX(0.9490)">Power Pivot</span>
<span class="t" style="left:356.82px;top:12.30px;font-size:11.6px;font-weight:400;color:#217346;transform:scaleX(0.9579)">Chart Design</span>
<span class="t" style="left:441.03px;top:12.30px;font-size:11.6px;font-weight:400;color:#fff;transform:scaleX(0.9748)">Format</span>
<span class="t" style="left:525.12px;top:12.30px;font-size:11.6px;font-weight:400;color:#fff;transform:scaleX(0.9394)">Tell</span>
<span class="t" style="left:545.49px;top:12.30px;font-size:11.6px;font-weight:400;color:#fff;transform:scaleX(1.0233)">me</span>
<span class="t" style="left:565.40px;top:12.30px;font-size:11.6px;font-weight:400;color:#fff;transform:scaleX(0.9653)">what</span>
<span class="t" style="left:592.20px;top:12.30px;font-size:11.6px;font-weight:400;color:#fff;transform:scaleX(0.9444)">you</span>
<span class="t" style="left:612.40px;top:12.30px;font-size:11.6px;font-weight:400;color:#fff;transform:scaleX(0.9592)">want</span>
<span class="t" style="left:638.91px;top:12.30px;font-size:11.6px;font-weight:400;color:#fff;transform:scaleX(0.9444)">to</span>
<span class="t" style="left:651.89px;top:12.30px;font-size:11.6px;font-weight:400;color:#fff;transform:scaleX(1.2043)">do</span>
<span class="t" style="left:28.23px;top:106.60px;font-size:10.1px;font-weight:400;color:#444;transform:scaleX(0.9346)">Chart Styles</span>
<span class="t" style="left:436.45px;top:71.80px;font-size:12px;font-weight:400;color:#b4b4b4;transform:scaleX(0.8985)">Switch Row/</span>
<span class="t" style="left:447.63px;top:86.60px;font-size:12px;font-weight:400;color:#b4b4b4;transform:scaleX(0.9450)">Column</span>
<span class="t" style="left:505.05px;top:71.80px;font-size:12px;font-weight:400;color:#3c3c3c;transform:scaleX(0.9053)">Select</span>
<span class="t" style="left:508.49px;top:86.60px;font-size:12px;font-weight:400;color:#3c3c3c;transform:scaleX(0.9226)">Data</span>
<span class="t" style="left:476.17px;top:106.60px;font-size:10.1px;font-weight:400;color:#444;transform:scaleX(0.9098)">Data</span>
<span class="t" style="left:563.85px;top:71.80px;font-size:12px;font-weight:400;color:#3c3c3c;transform:scaleX(0.9037)">Change</span>
<span class="t" style="left:556.45px;top:86.60px;font-size:12px;font-weight:400;color:#3c3c3c;transform:scaleX(0.9104)">Chart Type</span>
<span class="t" style="left:572.12px;top:106.60px;font-size:10.1px;font-weight:400;color:#444;transform:scaleX(0.9012)">Type</span>
<span class="t" style="left:630.65px;top:71.80px;font-size:12px;font-weight:400;color:#3c3c3c;transform:scaleX(0.9550)">Move</span>
<span class="t" style="left:632.04px;top:86.60px;font-size:12px;font-weight:400;color:#3c3c3c;transform:scaleX(0.9165)">Chart</span>
<span class="t" style="left:626.31px;top:106.60px;font-size:10.1px;font-weight:400;color:#444;transform:scaleX(0.9782)">Location</span>
<span class="t" style="left:23.10px;top:192.60px;font-size:12.6px;font-weight:400;color:#444;transform:scaleX(1.0000)">G</span>
<span class="t" style="left:100.00px;top:192.60px;font-size:12.6px;font-weight:400;color:#444;transform:scaleX(1.0000)">H</span>
<span class="t" style="left:191.95px;top:192.60px;font-size:12.6px;font-weight:400;color:#444;transform:scaleX(0.8000)">I</span>
<span class="t" style="left:262.70px;top:192.60px;font-size:12.6px;font-weight:400;color:#444;transform:scaleX(1.0000)">J</span>
<span class="t" style="left:322.15px;top:192.60px;font-size:12.6px;font-weight:400;color:#444;transform:scaleX(1.0000)">K</span>
<span class="t" style="left:385.60px;top:192.60px;font-size:12.6px;font-weight:400;color:#444;transform:scaleX(0.9565)">L</span>
<span class="t" style="left:450.25px;top:192.60px;font-size:12.6px;font-weight:400;color:#444;transform:scaleX(1.0000)">M</span>
<span class="t" style="left:513.30px;top:192.60px;font-size:12.6px;font-weight:400;color:#444;transform:scaleX(1.0000)">N</span>
<span class="t" style="left:573.00px;top:192.60px;font-size:12.6px;font-weight:400;color:#444;transform:scaleX(1.0294)">O</span>
<span class="t" style="left:633.50px;top:192.60px;font-size:12.6px;font-weight:400;color:#444;transform:scaleX(1.0385)">P</span>
<span class="t" style="left:59.96px;top:228.90px;font-size:11.8px;font-weight:700;color:#000;transform:scaleX(0.9285)">Bias</span>
<span class="t" style="left:60.39px;top:247.00px;font-size:11.8px;font-weight:700;color:#000;transform:scaleX(1.0219)">Std. Deviation</span>
<span class="t" style="left:59.90px;top:265.10px;font-size:11.8px;font-weight:700;color:#000;transform:scaleX(0.9992)">Upper LoA</span>
<span class="t" style="left:59.92px;top:283.20px;font-size:11.8px;font-weight:700;color:#000;transform:scaleX(0.9783)">Lower LoA</span>
<span class="t" style="left:201.76px;top:228.90px;font-size:11.6px;font-weight:400;color:#000;transform:scaleX(1.0750)">0.075</span>
<span class="t" style="left:160.97px;top:247.00px;font-size:11.6px;font-weight:400;color:#000;transform:scaleX(1.0584)">0.634843536</span>
<span class="t" style="left:161.34px;top:265.10px;font-size:11.6px;font-weight:400;color:#000;transform:scaleX(1.0566)">1.244293331</span>
<span class="t" style="left:163.97px;top:283.20px;font-size:11.6px;font-weight:400;color:#000;transform:scaleX(1.0646)">-1.24429333</span>
<span class="t" style="left:298.31px;top:228.90px;font-size:11.8px;font-weight:700;color:#000;transform:scaleX(0.9500)">X-Axis</span>
<span class="t" style="left:358.50px;top:228.90px;font-size:11.8px;font-weight:700;color:#000;transform:scaleX(0.9992)">Upper LoA</span>
<span class="t" style="left:425.32px;top:228.90px;font-size:11.8px;font-weight:700;color:#000;transform:scaleX(0.9783)">Lower LoA</span>
<span class="t" style="left:490.16px;top:228.90px;font-size:11.8px;font-weight:700;color:#000;transform:scaleX(0.9263)">Bias</span>
<span class="t" style="left:346.73px;top:247.00px;font-size:11.6px;font-weight:400;color:#000;transform:scaleX(1.1102)">0</span>
<span class="t" style="left:340.18px;top:265.10px;font-size:11.6px;font-weight:400;color:#000;transform:scaleX(1.0584)">25</span>
<span class="t" style="left:362.53px;top:247.00px;font-size:11.6px;font-weight:400;color:#000;transform:scaleX(1.0667)">1.2442933</span>
<span class="t" style="left:362.53px;top:265.10px;font-size:11.6px;font-weight:400;color:#000;transform:scaleX(1.0667)">1.2442933</span>
<span class="t" style="left:429.36px;top:247.00px;font-size:11.6px;font-weight:400;color:#000;transform:scaleX(1.0800)">-1.244293</span>
<span class="t" style="left:429.36px;top:265.10px;font-size:11.6px;font-weight:400;color:#000;transform:scaleX(1.0800)">-1.244293</span>
<span class="t" style="left:514.76px;top:247.00px;font-size:11.6px;font-weight:400;color:#000;transform:scaleX(1.0750)">0.075</span>
<span class="t" style="left:514.76px;top:265.10px;font-size:11.6px;font-weight:400;color:#000;transform:scaleX(1.0750)">0.075</span>
<span class="t" style="left:220.89px;top:326.70px;font-size:16.2px;font-weight:400;color:#595959;transform:scaleX(1.0062)">Bland-Altman Plot</span>
<span class="t" style="left:66.53px;top:356.20px;font-size:10.4px;font-weight:400;color:#595959;transform:scaleX(0.9547)">1.5</span>
<span class="t" style="left:75.42px;top:392.30px;font-size:10.4px;font-weight:400;color:#595959;transform:scaleX(0.8557)">1</span>
<span class="t" style="left:67.03px;top:429.00px;font-size:10.4px;font-weight:400;color:#595959;transform:scaleX(0.9371)">0.5</span>
<span class="t" style="left:74.90px;top:465.00px;font-size:10.4px;font-weight:400;color:#595959;transform:scaleX(1.0000)">0</span>
</div></body></html>
